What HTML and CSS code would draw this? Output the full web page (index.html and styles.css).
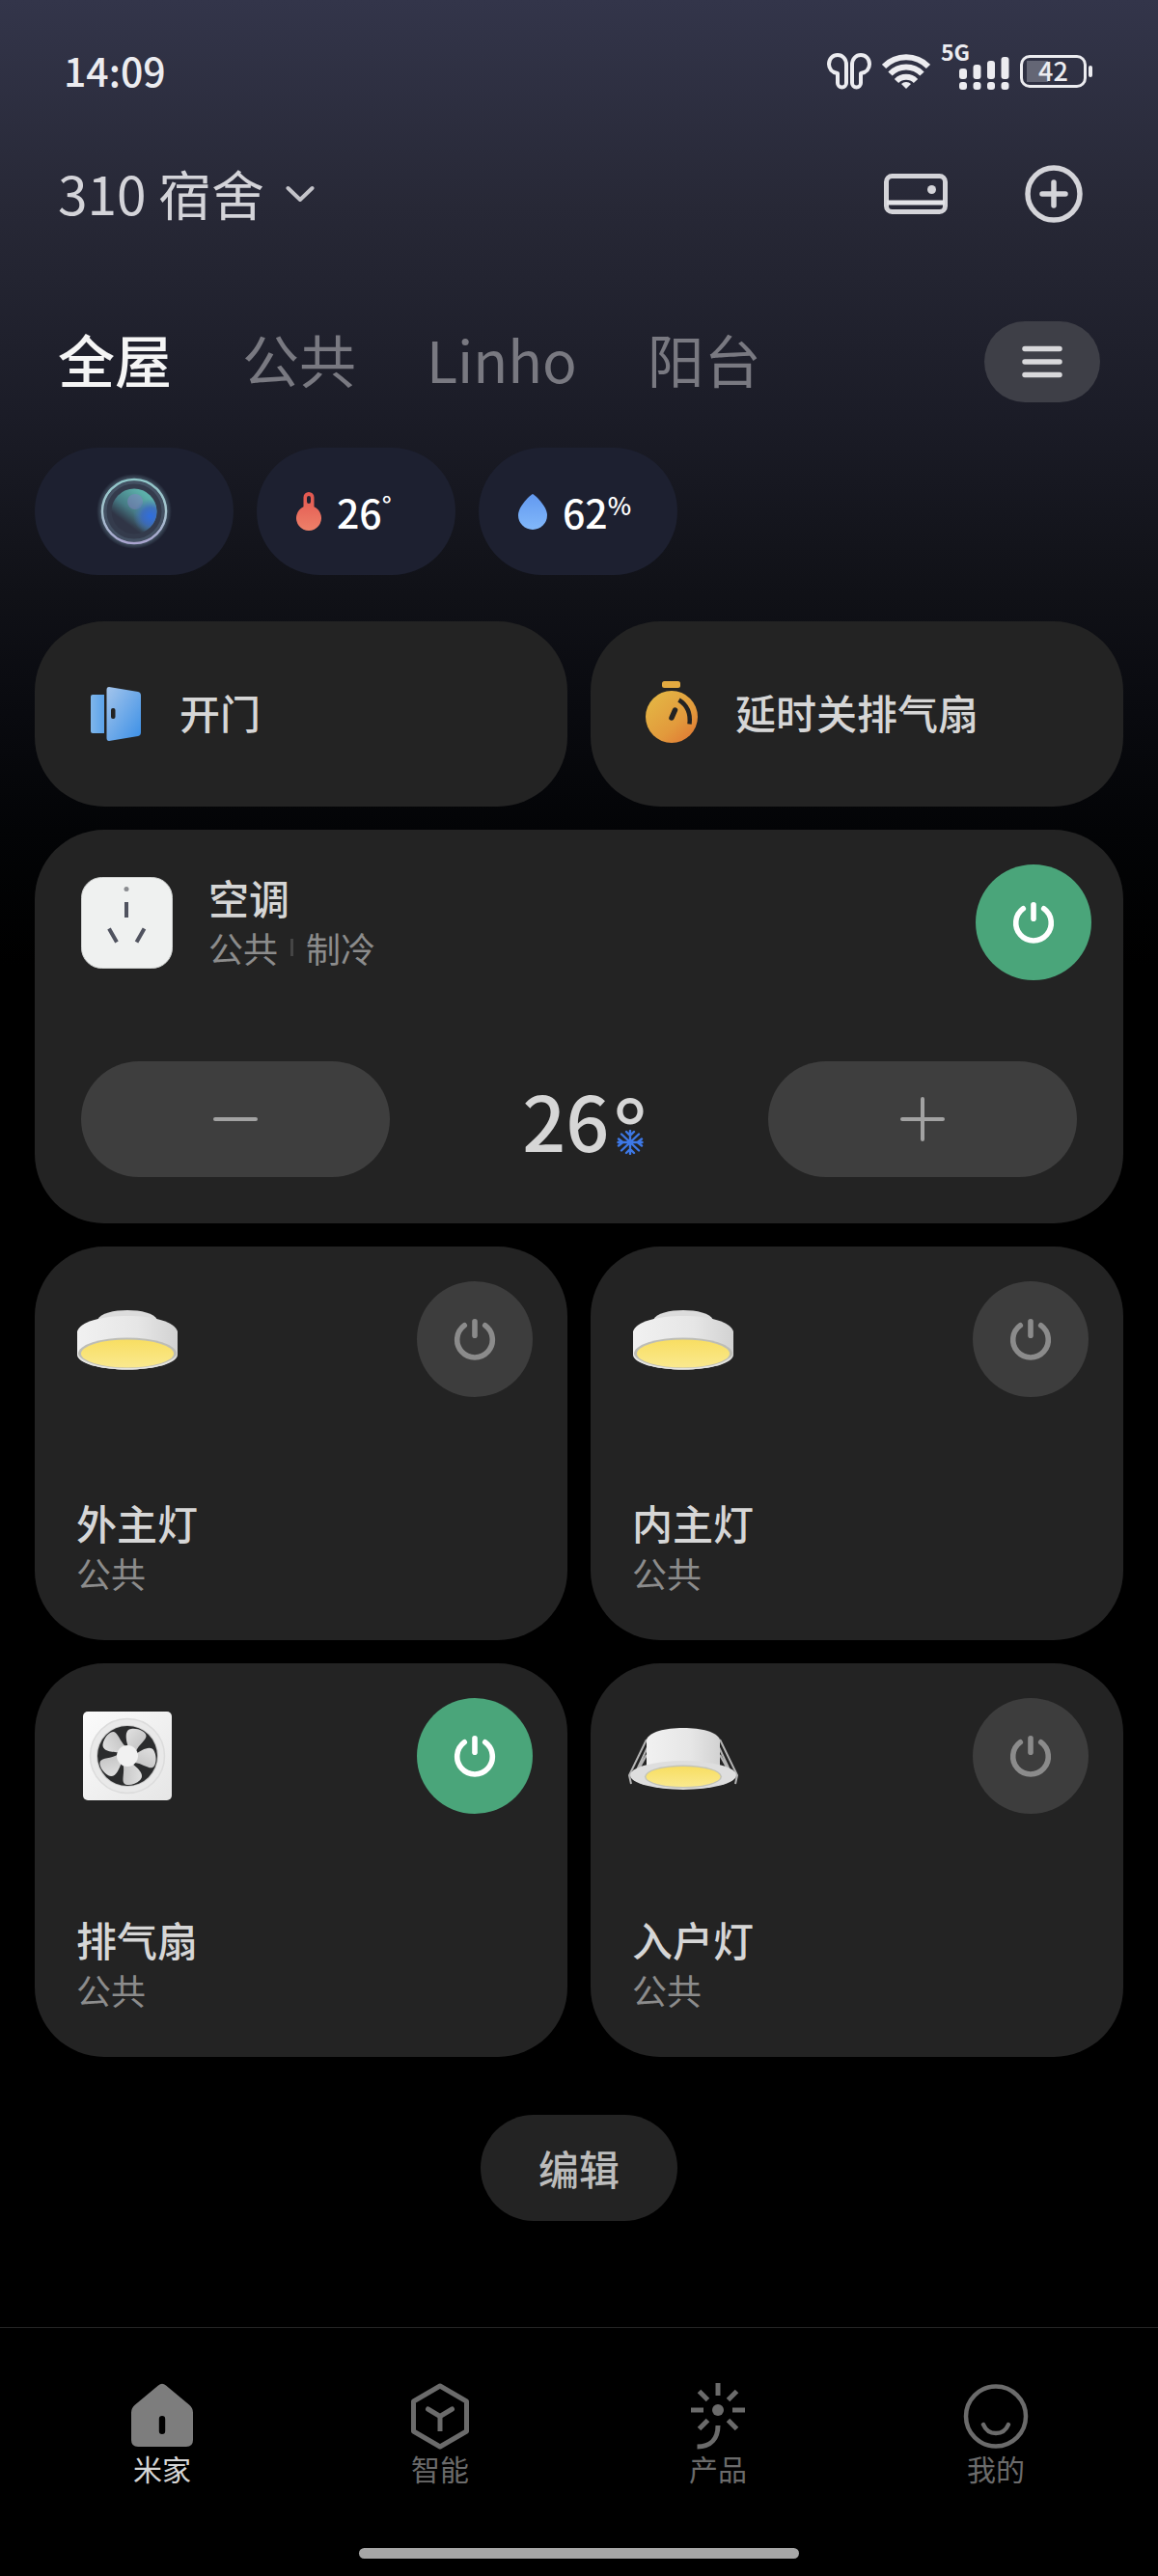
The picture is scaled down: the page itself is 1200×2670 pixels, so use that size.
FILE: index.html
```html
<!DOCTYPE html>
<html lang="zh-CN">
<head>
<meta charset="utf-8">
<meta name="viewport" content="width=device-width, initial-scale=1">
<title>米家</title>
<link rel="stylesheet" href="styles.css">
</head>
<body>
<svg class="defs" width="0" height="0" aria-hidden="true">
  <defs>
    <linearGradient id="lampBody" x1="0" x2="1" y1="0" y2="0"><stop offset="0" stop-color="#f1f1f1"/><stop offset=".6" stop-color="#e6e6e6"/><stop offset="1" stop-color="#d2d2d2"/></linearGradient>
    <linearGradient id="lampGlow" x1="0" x2="0" y1="0" y2="1"><stop offset="0" stop-color="#f8de62"/><stop offset="1" stop-color="#fae98e"/></linearGradient>
  </defs>
  <symbol id="power" viewBox="0 0 44 44">
    <path d="M11.3 7.8a18.3 18.3 0 1 0 21.4 0" fill="none" stroke="currentColor" stroke-width="5.6" stroke-linecap="round"/>
    <path d="M22 3.800v14.400" fill="none" stroke="currentColor" stroke-width="5.600" stroke-linecap="round"/>
  </symbol>
  <symbol id="ceiling-lamp" viewBox="0 0 104 62">
    <path d="M21 10C24 3 38 0 52 0s28 3 31 10v6H21z" fill="#dcdcdc"/>
    <path d="M0 22C3 12 25 6 52 6s49 6 52 16v24c0 9-23 15.500-52 15.500S0 55 0 46z" fill="url(#lampBody)"/>
    <ellipse cx="52" cy="45" rx="51" ry="16.500" fill="#bdbdb6"/>
    <path d="M1 46c0 9 23 15.500 51 15.500S103 55 103 46c-4 8-24 14-51 14S5 54 1 46z" fill="#e4e4e0"/>
    <ellipse cx="52" cy="45" rx="48" ry="14.500" fill="url(#lampGlow)"/>
  </symbol>
</svg>

<header class="status">
  <time class="clock">14:09</time>
  <div class="status-icons">
    <svg width="46" height="38" viewBox="0 0 46 38" fill="none" stroke="#ececf0" stroke-width="4" stroke-linejoin="round" aria-hidden="true">
      <path d="M20 12v19a4.500 4.500 0 0 1-9 0V21C5 20 2 16 2 11.500 2 6 6 2 11 2s9 4 9 10z"/>
      <path d="M26 12v19a4.500 4.500 0 0 0 9 0V21c6-1 9-5 9-9.500C44 6 40 2 35 2s-9 4-9 10z"/>
    </svg>
    <svg width="50" height="38" viewBox="0 0 50 38" fill="none" stroke="#ececf0" stroke-width="6" aria-hidden="true">
      <path d="M2 14a32 32 0 0 1 46 0"/><path d="M8.500 21.500a23 23 0 0 1 33 0"/><path d="M15 29a14 14 0 0 1 20 0"/>
      <path d="M25 37l-5-5a7 7 0 0 1 10 0z" fill="#ececf0" stroke="none"/>
    </svg>
    <div class="signal">
      <span class="network">5G</span>
      <svg width="52" height="34" viewBox="0 0 52 34" fill="#ececf0" aria-hidden="true">
        <rect x="0" y="12" width="8" height="11" rx="3"/><rect x="14.500" y="8" width="8" height="15" rx="3"/><rect x="29" y="4" width="8" height="19" rx="3"/><rect x="43.500" y="0" width="8" height="23" rx="3"/>
        <rect x="0" y="26" width="8" height="8" rx="3"/><rect x="14.500" y="26" width="8" height="8" rx="3"/><rect x="29" y="26" width="8" height="8" rx="3"/><rect x="43.500" y="26" width="8" height="8" rx="3"/>
      </svg>
    </div>
    <div class="battery"><span>42</span></div>
  </div>
</header>

<main class="home">
  <div class="topbar">
    <button class="house" type="button"><span>310 宿舍</span>
      <svg width="30" height="18" viewBox="0 0 30 18" fill="none" stroke="#c4c4ca" stroke-width="4" stroke-linecap="round" stroke-linejoin="round" aria-hidden="true"><path d="M2.500 3L15 15 27.500 3"/></svg>
    </button>
    <div class="actions">
      <button type="button" aria-label="设备卡片">
        <svg width="66" height="42" viewBox="0 0 66 42" fill="none" stroke="#d4d4d9" stroke-width="5" aria-hidden="true"><rect x="2.500" y="2.500" width="61" height="37" rx="6"/><path d="M3 30h60" stroke="#e4e4e8"/><circle cx="49.500" cy="16.500" r="4.500" fill="#d4d4d9" stroke="none"/></svg>
      </button>
      <button type="button" aria-label="添加">
        <svg width="60" height="60" viewBox="0 0 60 60" fill="none" stroke="#d4d4d9" stroke-width="5.500" stroke-linecap="round" aria-hidden="true"><circle cx="30" cy="30" r="27"/><path d="M30 18v24M18 30h24"/></svg>
      </button>
    </div>
  </div>

  <nav class="rooms" aria-label="房间">
    <a class="room current" href="#all">全屋</a>
    <a class="room" href="#public">公共</a>
    <a class="room" href="#linho">Linho</a>
    <a class="room" href="#balcony">阳台</a>
    <button class="menu" type="button" aria-label="菜单">
      <svg width="42" height="34" viewBox="0 0 42 34" stroke="#d8d8db" stroke-width="5.500" stroke-linecap="round" aria-hidden="true"><path d="M3 3.500h36M3 17h36M3 30.500h36"/></svg>
    </button>
  </nav>

  <section class="pills" aria-label="环境">
    <button class="pill assistant" type="button" aria-label="小爱同学">
      <svg width="80" height="80" viewBox="0 0 80 80" aria-hidden="true">
        <defs>
          <linearGradient id="orbRing" x1="0" x2="0" y1="0" y2="1"><stop offset="0" stop-color="#8fc7c9"/><stop offset=".5" stop-color="#a7c4cf"/><stop offset="1" stop-color="#a9a4cf"/></linearGradient>
          <linearGradient id="orbFill" x1=".1" x2=".7" y1=".9" y2=".1"><stop offset=".25" stop-color="#303546"/><stop offset=".55" stop-color="#467a84"/><stop offset="1" stop-color="#5cb0aa"/></linearGradient>
          <radialGradient id="orbBlue"><stop offset="0" stop-color="#2f6ee0"/><stop offset=".5" stop-color="#3a68c4" stop-opacity=".8"/><stop offset="1" stop-color="#4a78b4" stop-opacity="0"/></radialGradient>
          <radialGradient id="orbGlow"><stop offset=".8" stop-color="#8fb8c8" stop-opacity=".5"/><stop offset="1" stop-color="#8fb8c8" stop-opacity="0"/></radialGradient>
          <clipPath id="orbClip"><circle cx="40" cy="40" r="23.500"/></clipPath>
        </defs>
        <circle cx="40" cy="40" r="39" fill="url(#orbGlow)"/>
        <circle cx="40" cy="40" r="33" fill="#343b4c" stroke="url(#orbRing)" stroke-width="2.500"/>
        <circle cx="40" cy="40" r="30" fill="none" stroke="#54687a" stroke-width="3" opacity=".5"/>
        <circle cx="40" cy="40" r="23.500" fill="url(#orbFill)"/>
        <g clip-path="url(#orbClip)"><circle cx="41" cy="30" r="8" fill="#8a80c8" opacity=".45"/><circle cx="57" cy="45" r="18" fill="url(#orbBlue)"/></g>
      </svg>
    </button>
    <button class="pill" type="button">
      <svg width="26" height="40" viewBox="0 0 26 40" aria-hidden="true"><defs><linearGradient id="warm" x1="0" x2="0" y1="0" y2="1"><stop offset="0" stop-color="#e2564f"/><stop offset="1" stop-color="#ee8069"/></linearGradient></defs><path fill="url(#warm)" fill-rule="evenodd" d="M7.500 5.500a5.500 5.500 0 0 1 11 0v9.700a13 13 0 1 1-11 0zM13 4a2 2 0 0 0-2 2v4a2 2 0 0 0 4 0V6a2 2 0 0 0-2-2z"/></svg>
      <span class="reading">26<sup>°</sup></span>
    </button>
    <button class="pill" type="button">
      <svg width="30" height="37" viewBox="0 0 30 37" aria-hidden="true"><defs><linearGradient id="cool" x1="0" x2="0" y1="0" y2="1"><stop offset="0" stop-color="#6299f0"/><stop offset="1" stop-color="#82b8fa"/></linearGradient></defs><path fill="url(#cool)" d="M15 0c1 0 15 12 15 22a15 15 0 0 1-30 0C0 12 14 0 15 0z"/></svg>
      <span class="reading">62<sup>%</sup></span>
    </button>
  </section>

  <section class="cards" aria-label="设备">
    <button class="card scene" type="button">
      <svg width="56" height="60" viewBox="0 0 56 60" aria-hidden="true"><defs><linearGradient id="doorA" x1="0" x2="1"><stop offset="0" stop-color="#7fb6ea"/><stop offset="1" stop-color="#5ca3ea"/></linearGradient><linearGradient id="doorB" x1="0" x2="1" y1="0" y2="1"><stop offset="0" stop-color="#a4c5ec"/><stop offset="1" stop-color="#3a8fe6"/></linearGradient></defs><path fill="url(#doorA)" d="M4 10h12v40H4a2 2 0 0 1-2-2V12a2 2 0 0 1 2-2z"/><path fill="url(#doorB)" d="M21 2l30 5q3 .5 3 4v38q0 3.500-3 4l-30 5q-2.500 0-2.500-3V5q0-3 2.500-3z"/><rect x="23" y="24" width="4.500" height="11" rx="2" fill="#232323"/></svg>
      <span>开门</span>
    </button>
    <button class="card scene" type="button">
      <svg width="56" height="70" viewBox="0 0 56 70" aria-hidden="true"><defs><linearGradient id="timer" x1=".1" x2=".9" y1=".1" y2="1"><stop offset="0" stop-color="#e4b644"/><stop offset=".6" stop-color="#e29a3c"/><stop offset="1" stop-color="#e07733"/></linearGradient></defs><rect x="18" y="1" width="19" height="7" rx="2.500" fill="#e3aa40"/><circle cx="28" cy="38" r="27" fill="url(#timer)"/><path d="M35.500 20.500q13 8 11 25" fill="none" stroke="#232323" stroke-width="4.500"/><path d="M28 39l3.500-8" stroke="#232323" stroke-width="5.500" stroke-linecap="round"/></svg>
      <span>延时关排气扇</span>
    </button>

    <article class="card climate">
      <div class="climate-head">
        <svg width="95" height="95" viewBox="0 0 95 95" aria-hidden="true"><rect x=".500" y=".500" width="94" height="94" rx="21" fill="#eff1f0" stroke="#cfd1d0"/><circle cx="47" cy="12.500" r="2.500" fill="#8a8c90"/><path d="M47 26v16M29 53.500l8 14M65.500 53.500l-8 14" stroke="#50535f" stroke-width="4" fill="none"/></svg>
        <div class="label">
          <h2>空调</h2>
          <p>公共<i></i>制冷</p>
        </div>
        <button class="power on" type="button" aria-label="空调 开关" aria-pressed="true"><svg width="44" height="44"><use href="#power"/></svg></button>
      </div>
      <div class="climate-body">
        <button class="step" type="button" aria-label="降低温度"><svg width="46" height="46" viewBox="0 0 46 46" stroke="#a2a2a2" stroke-width="4" stroke-linecap="round" aria-hidden="true"><path d="M2 23h42"/></svg></button>
        <div class="temperature">
          <span class="degrees">26</span>
          <span class="unit"><span>°</span>
            <svg width="28" height="26" viewBox="-14 -13 28 26" fill="none" stroke="#3d78e6" stroke-width="2.400" stroke-linecap="round" aria-hidden="true"><path d="M-12.500 0h25M0-12v24M-9-8.500L9 8.500M9-8.500L-9 8.500M-12-3.500L-7.500 0-12 3.500M12-3.500L7.500 0 12 3.500M-4-11L0-7l4-4M-4 11L0 7l4 4"/></svg>
          </span>
        </div>
        <button class="step" type="button" aria-label="升高温度"><svg width="46" height="46" viewBox="0 0 46 46" stroke="#a2a2a2" stroke-width="4" stroke-linecap="round" aria-hidden="true"><path d="M2 23h42M23 2v42"/></svg></button>
      </div>
    </article>

    <article class="card device">
      <div class="device-head">
        <svg class="picture" width="120" height="120" viewBox="-8 -30 120 120" aria-hidden="true"><use href="#ceiling-lamp" width="104" height="62"/></svg>
        <button class="power" type="button" aria-label="外主灯 开关" aria-pressed="false"><svg width="44" height="44"><use href="#power"/></svg></button>
      </div>
      <div class="label"><h2>外主灯</h2><p>公共</p></div>
    </article>
    <article class="card device">
      <div class="device-head">
        <svg class="picture" width="120" height="120" viewBox="-8 -30 120 120" aria-hidden="true"><use href="#ceiling-lamp" width="104" height="62"/></svg>
        <button class="power" type="button" aria-label="内主灯 开关" aria-pressed="false"><svg width="44" height="44"><use href="#power"/></svg></button>
      </div>
      <div class="label"><h2>内主灯</h2><p>公共</p></div>
    </article>
    <article class="card device">
      <div class="device-head">
        <svg class="picture" width="120" height="120" viewBox="-60 -60 120 120" aria-hidden="true">
          <defs>
            <linearGradient id="fanFrame" x1="0" x2="1" y1="0" y2="1"><stop offset="0" stop-color="#fbfbfb"/><stop offset="1" stop-color="#e6e6e6"/></linearGradient>
            <linearGradient id="blade" x1="0" x2="1" y1="0" y2="1"><stop offset="0" stop-color="#e2e2e2"/><stop offset="1" stop-color="#bdbdbd"/></linearGradient>
            <path id="fan-blade" fill="url(#blade)" d="M1-9C-1-15-4-27 4-28c7-1 15 3 15.500 7C20-17 12-12 9-5z"/>
          </defs>
          <rect x="-46" y="-46" width="92" height="92" rx="5" fill="url(#fanFrame)"/>
          <circle r="38.500" fill="#e9e9e9" stroke="#dcdcdc" stroke-width="1.500"/>
          <circle r="32" fill="#c9c9c9"/><circle r="31" fill="#2b2c2d"/>
          <use href="#fan-blade"/><use href="#fan-blade" transform="rotate(72)"/><use href="#fan-blade" transform="rotate(144)"/><use href="#fan-blade" transform="rotate(216)"/><use href="#fan-blade" transform="rotate(288)"/>
          <circle r="11" fill="#f1f1f1"/>
        </svg>
        <button class="power on" type="button" aria-label="排气扇 开关" aria-pressed="true"><svg width="44" height="44"><use href="#power"/></svg></button>
      </div>
      <div class="label"><h2>排气扇</h2><p>公共</p></div>
    </article>
    <article class="card device">
      <div class="device-head">
        <svg class="picture" width="120" height="120" viewBox="-3 -31 120 120" aria-hidden="true">
          <g fill="none" stroke="#b4b4b4" stroke-width="2"><path d="M19 12L1 49l2 9M20 20L5 52M19 28L8 48"/><path d="M95 12l18 37-2 9M94 20l15 32M95 28l11 20"/></g>
          <path d="M19 12C22 4 38 0 57 0s35 4 38 12v34H19z" fill="url(#lampBody)"/>
          <ellipse cx="57" cy="49" rx="55" ry="15" fill="#dedede"/>
          <ellipse cx="57" cy="50.500" rx="40" ry="12" fill="#c3c3b6"/>
          <ellipse cx="57" cy="50.500" rx="38.500" ry="10.500" fill="url(#lampGlow)"/>
        </svg>
        <button class="power" type="button" aria-label="入户灯 开关" aria-pressed="false"><svg width="44" height="44"><use href="#power"/></svg></button>
      </div>
      <div class="label"><h2>入户灯</h2><p>公共</p></div>
    </article>
  </section>

  <button class="edit" type="button">编辑</button>
</main>

<footer class="dock">
  <nav class="tabs" aria-label="主导航">
    <a class="tab current" href="#home">
      <svg width="70" height="70" viewBox="0 0 70 70" aria-hidden="true"><path fill="#7d7d7d" fill-rule="evenodd" d="M31 3.500q4-3.500 8 0l24 20q4 3.500 4 8V60q0 7-7 7H10q-7 0-7-7V31.500q0-4.500 4-8zM35 35a3.200 3.200 0 0 0-3.200 3.200v12.600a3.200 3.200 0 0 0 6.400 0V38.200A3.200 3.200 0 0 0 35 35z"/></svg>
      <span>米家</span>
    </a>
    <a class="tab" href="#smart">
      <svg width="70" height="70" viewBox="0 0 70 70" fill="none" stroke="#6b6b6b" stroke-width="5" aria-hidden="true"><path stroke-linejoin="round" d="M35 4l27.500 16v31L35 67 7.500 51V20z"/><path stroke-linecap="round" d="M22.500 28L35 35.500 47.500 28"/><path d="M35 35v16"/></svg>
      <span>智能</span>
    </a>
    <a class="tab" href="#products">
      <svg width="70" height="70" viewBox="0 0 70 70" fill="none" stroke="#6b6b6b" stroke-width="5" aria-hidden="true"><circle cx="35" cy="29" r="6" fill="#6b6b6b" stroke="none"/><path d="M35 1v13M7 29h13M50 29h13M15.500 9.500l9 9M54.500 9.500l-9 9M15.500 48.500l9-9M54.500 48.500l-9-9M35 45c0 13-7 22-21.500 22"/></svg>
      <span>产品</span>
    </a>
    <a class="tab" href="#mine">
      <svg width="70" height="70" viewBox="0 0 70 70" fill="none" stroke="#6b6b6b" stroke-width="4.500" aria-hidden="true"><circle cx="35" cy="35.500" r="31"/><path stroke-linecap="round" d="M22 44c5 12 21 12 26 0"/></svg>
      <span>我的</span>
    </a>
  </nav>
  <div class="home-indicator"></div>
</footer>
</body>
</html>
```
FILE: styles.css
```css
* { box-sizing: border-box; }

body {
  margin: 0;
  min-height: 100vh;
  display: flex;
  flex-direction: column;
  background: #000 linear-gradient(#33354a 0, #272836 215px, #1b1c27 430px, #111218 600px, #090a0f 740px, #030406 860px, #000 1000px) no-repeat;
  color: #d6d6d6;
  font-family: "Noto Sans CJK SC", "Noto Sans", sans-serif;
}

button {
  margin: 0;
  padding: 0;
  border: 0;
  background: none;
  color: inherit;
  font: inherit;
}

a { color: inherit; text-decoration: none; }
h2, p { margin: 0; font-weight: inherit; }
svg { display: block; flex: none; }
.defs { position: absolute; }

/* Status bar */
.status {
  display: flex;
  justify-content: space-between;
  align-items: center;
  height: 148px;
  padding: 0 68px 0 66px;
  color: #ececf0;
}
.clock {
  padding-bottom: 4px;
  font-size: 41px;
  font-weight: 500;
  line-height: 56px;
}
.status-icons { display: flex; align-items: center; gap: 11px; }
.signal { position: relative; padding: 4px 0 0 19px; }
.network {
  position: absolute;
  left: 0;
  top: -16px;
  font-size: 23px;
  font-weight: 700;
  line-height: 28px;
}
.battery {
  position: relative;
  display: flex;
  align-items: center;
  justify-content: center;
  width: 69px;
  height: 34px;
  margin-right: 6px;
  border: 3px solid #ececf0;
  border-radius: 10px;
  background: linear-gradient(#646675, #646675) 4px center / 22px 22px no-repeat;
  font-size: 27px;
  font-weight: 500;
  line-height: 28px;
}
.battery span { padding-bottom: 2px; }
.battery::after {
  content: "";
  position: absolute;
  right: -9px;
  top: 8px;
  width: 4px;
  height: 12px;
  border-radius: 2px;
  background: #ececf0;
}

.home {
  display: flex;
  flex-direction: column;
  padding: 0 36px;
}

/* House name and actions */
.topbar {
  display: flex;
  justify-content: space-between;
  align-items: center;
  height: 106px;
  padding: 0 42px 0 24px;
  color: #d4d4d9;
}
.house {
  display: flex;
  align-items: center;
  gap: 22px;
  font-size: 55px;
  line-height: 72px;
}
.house span { padding-bottom: 4px; }
.actions { display: flex; align-items: center; gap: 80px; }

/* Rooms */
.rooms {
  display: flex;
  align-items: center;
  gap: 73px;
  height: 84px;
  margin-top: 79px;
  padding: 0 24px;
  color: #797981;
  font-size: 59px;
  line-height: 80px;
}
.room { padding-bottom: 6px; }
.room.current { color: #f5f5f5; font-weight: 500; }
.menu {
  display: grid;
  place-items: center;
  width: 120px;
  height: 84px;
  margin-left: auto;
  border-radius: 42px;
  background: #3e3f47;
}

/* Environment readings */
.pills { display: flex; gap: 24px; margin-top: 47px; }
.pill {
  display: flex;
  align-items: center;
  gap: 16px;
  width: 206px;
  height: 132px;
  padding-left: 41px;
  border-radius: 66px;
  background: #1d2030;
  color: #fff;
}
.pill.assistant { justify-content: center; padding: 0; }
.reading {
  display: flex;
  font-size: 41px;
  font-weight: 500;
  line-height: 56px;
}
.reading sup { font-size: 26px; line-height: 42px; }

/* Cards */
.cards {
  display: grid;
  grid-template-columns: repeat(2, 1fr);
  gap: 24px;
  margin-top: 48px;
}
.card { border-radius: 72px; background: #232323; }
.scene {
  display: flex;
  align-items: center;
  gap: 38px;
  height: 192px;
  padding: 0 56px;
  font-size: 42px;
  font-weight: 500;
  line-height: 56px;
}
.scene span { padding-bottom: 4px; }
.label h2 {
  font-size: 42px;
  font-weight: 500;
  line-height: 56px;
}
.label p {
  display: flex;
  align-items: center;
  gap: 13px;
  color: #8c8c8c;
  font-size: 36px;
  line-height: 48px;
}
.label i { width: 3px; height: 18px; background: #454545; }

.power {
  display: grid;
  place-items: center;
  width: 120px;
  height: 120px;
  margin-left: auto;
  border-radius: 50%;
  background: #3d3d3d;
  color: #8b8b8b;
}
.power.on { background: #4aa57a; color: #fff; }

.climate {
  grid-column: 1 / -1;
  display: flex;
  flex-direction: column;
  gap: 84px;
  padding: 36px 48px 48px;
}
.climate-head {
  display: flex;
  align-items: center;
  gap: 37px;
  margin-right: -15px;
}
.climate-head .label { padding-bottom: 4px; }
.climate-body {
  display: flex;
  justify-content: space-between;
  align-items: center;
}
.step {
  display: grid;
  place-items: center;
  width: 320px;
  height: 120px;
  border-radius: 60px;
  background: #3e3e3e;
}
.temperature {
  display: flex;
  align-items: center;
  gap: 4px;
  padding-left: 12px;
}
.degrees { font-size: 79px; font-weight: 500; line-height: 108px; }
.unit {
  display: flex;
  flex-direction: column;
  align-items: center;
  gap: 8px;
}
.unit span { height: 40px; font-size: 92px; font-weight: 500; line-height: 92px; }

.device {
  display: flex;
  flex-direction: column;
  justify-content: space-between;
  height: 408px;
  padding: 36px 36px 46px;
}
.device-head { display: flex; }
.device .label { padding-left: 7px; }

.edit {
  align-self: center;
  width: 204px;
  height: 110px;
  margin: 60px 0;
  border-radius: 55px;
  background: #232323;
  color: #bcbcbc;
  font-size: 42px;
  font-weight: 500;
  line-height: 56px;
}

/* Bottom navigation */
.dock {
  display: flex;
  flex-direction: column;
  align-items: center;
  gap: 64px;
  margin-top: auto;
  padding: 56px 24px 18px;
  border-top: 1px solid #262626;
}
.tabs { display: grid; grid-template-columns: repeat(4, 1fr); width: 100%; }
.tab {
  display: flex;
  flex-direction: column;
  align-items: center;
  color: #6b6b6b;
  font-size: 30px;
  line-height: 38px;
}
.tab.current { color: #d6d6d6; }
.home-indicator {
  width: 456px;
  max-width: 60%;
  height: 11px;
  border-radius: 6px;
  background: #a6a6a6;
}
```
